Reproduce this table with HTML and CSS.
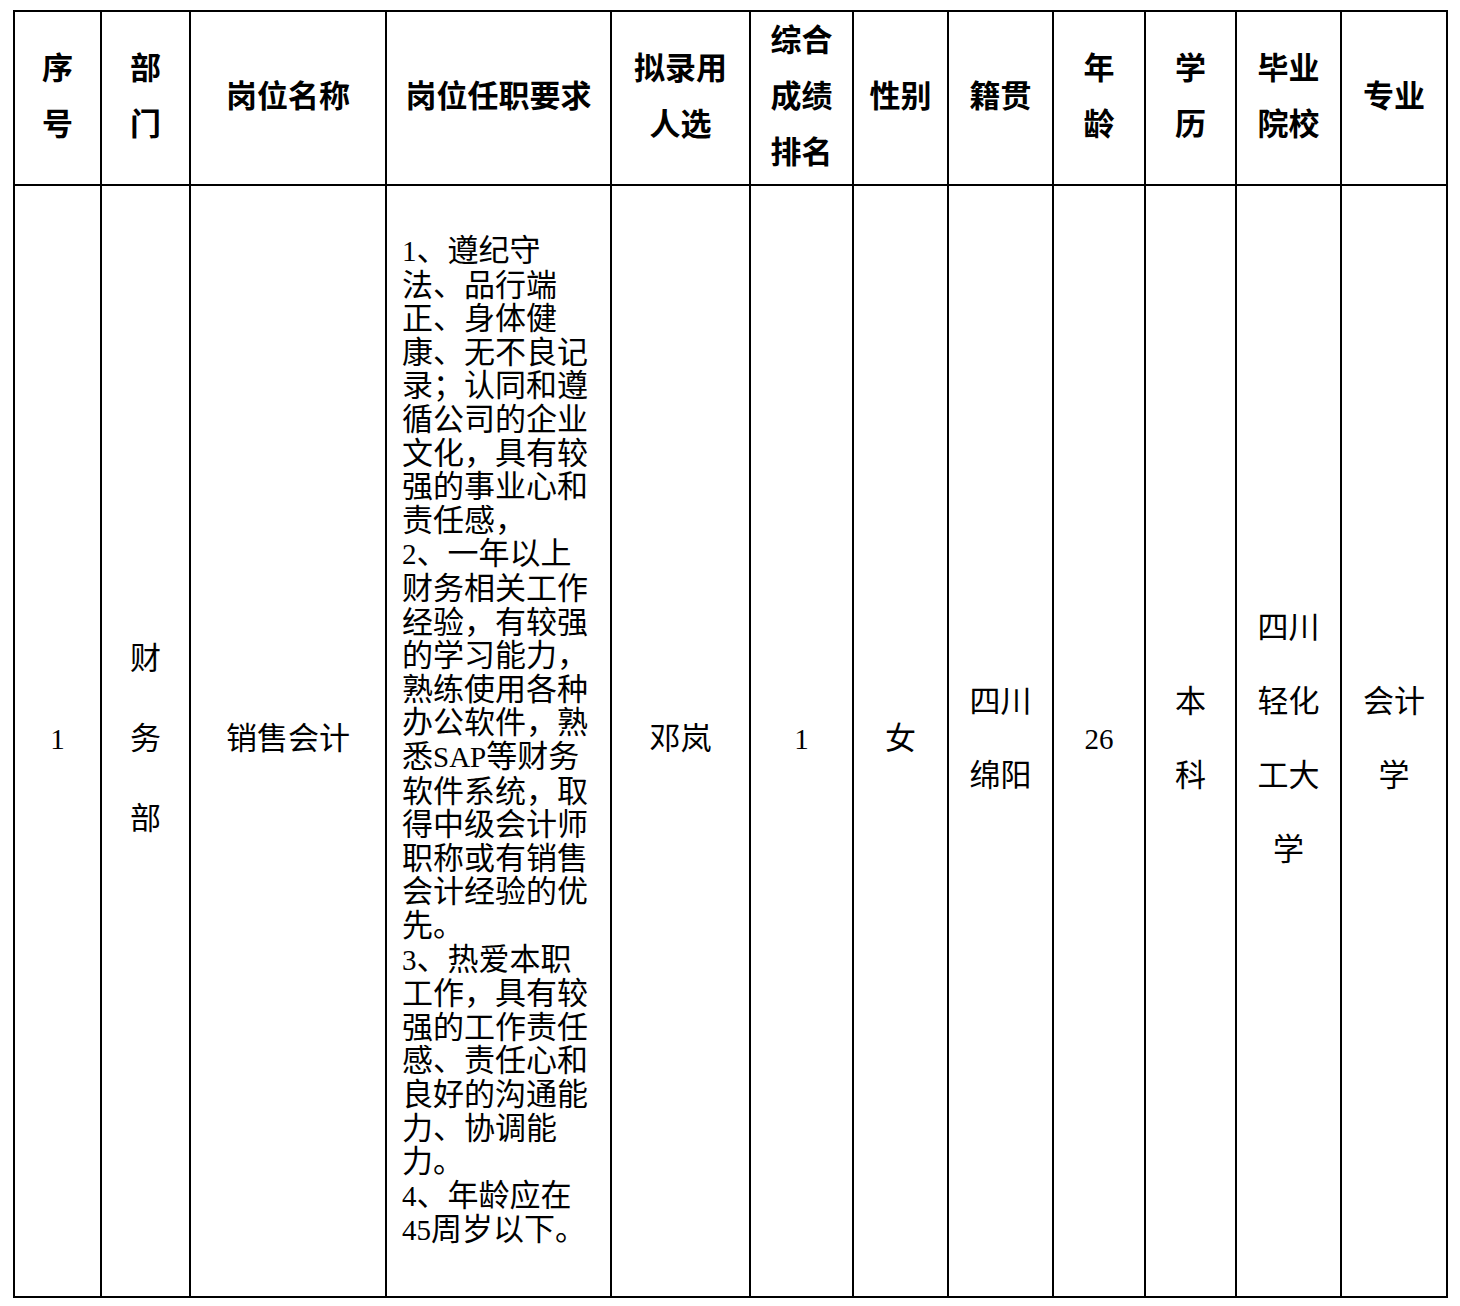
FILE: index.html
```html
<!DOCTYPE html>
<html lang="zh-CN">
<head>
<meta charset="utf-8">
<title>拟录用人选</title>
<link rel="stylesheet" href="styles.css">
</head>
<body>
<table class="grid">
  <colgroup>
    <col class="c1"><col class="c2"><col class="c3"><col class="c4"><col class="c5"><col class="c6">
    <col class="c7"><col class="c8"><col class="c9"><col class="c10"><col class="c11"><col class="c12">
  </colgroup>
  <thead>
    <tr class="head">
      <th><div class="hd">序<br>号</div></th>
      <th><div class="hd">部<br>门</div></th>
      <th><div class="hd">岗位名称</div></th>
      <th><div class="hd">岗位任职要求</div></th>
      <th><div class="hd">拟录用<br>人选</div></th>
      <th><div class="hd">综合<br>成绩<br>排名</div></th>
      <th><div class="hd">性别</div></th>
      <th><div class="hd">籍贯</div></th>
      <th><div class="hd">年<br>龄</div></th>
      <th><div class="hd">学<br>历</div></th>
      <th><div class="hd">毕业<br>院校</div></th>
      <th><div class="hd">专业</div></th>
    </tr>
  </thead>
  <tbody>
    <tr class="body">
      <td><span class="lat">1</span></td>
      <td class="tall">财<br>务<br>部</td>
      <td>销售会计</td>
      <td class="req"><span class="lat">1</span>、遵纪守法、品行端正、身体健康、无不良记录；认同和遵循公司的企业文化，具有较强的事业心和责任感，<br><span class="lat">2</span>、一年以上财务相关工作经验，有较强的学习能力，熟练使用各种办公软件，熟悉<span class="lat">SAP</span>等财务软件系统，取得中级会计师职称或有销售会计经验的优先。<br><span class="lat">3</span>、热爱本职工作，具有较强的工作责任感、责任心和良好的沟通能力、协调能力。<br><span class="lat">4</span>、年龄应在<span class="lat">45</span>周岁以下。</td>
      <td>邓岚</td>
      <td><span class="lat">1</span></td>
      <td>女</td>
      <td class="mid">四川<br>绵阳</td>
      <td><span class="lat">26</span></td>
      <td class="mid">本<br>科</td>
      <td class="mid">四川<br>轻化<br>工大<br>学</td>
      <td class="mid">会计<br>学</td>
    </tr>
  </tbody>
</table>
</body>
</html>
```
FILE: styles.css
```css
html, body {
  margin: 0;
  padding: 0;
  background: #ffffff;
}

body {
  font-family: "Liberation Serif", "Noto Sans CJK SC", serif;
  color: #000000;
}

.grid {
  border-collapse: collapse;
  table-layout: fixed;
  width: 1435px;
  margin: 10px 0 0 13px;
  font-size: 31px;
}

.c1 { width: 87px; }
.c2 { width: 89px; }
.c3 { width: 196px; }
.c4 { width: 225px; }
.c5 { width: 139px; }
.c6 { width: 103px; }
.c7 { width: 95px; }
.c8 { width: 105px; }
.c9 { width: 92px; }
.c10 { width: 91px; }
.c11 { width: 105px; }
.c12 { width: 106px; }

.grid th,
.grid td {
  border: 2px solid #000000;
  padding: 0;
  text-align: center;
  vertical-align: middle;
}

.head {
  height: 174px;
}

.head th {
  font-family: "Noto Sans CJK SC", sans-serif;
  font-weight: 700;
  line-height: 56px;
}

.hd {
  margin-top: -8px;
}

.body {
  height: 1112px;
}

.body td {
  line-height: 74px;
  font-weight: 400;
  padding-bottom: 4px;
}

.body td.tall {
  line-height: 80px;
}

.body td.req {
  text-align: left;
  line-height: 33.6px;
  padding: 0 15px 0 15px;
}

.lat {
  font-family: "Liberation Serif", serif;
  font-size: 29px;
}
```
